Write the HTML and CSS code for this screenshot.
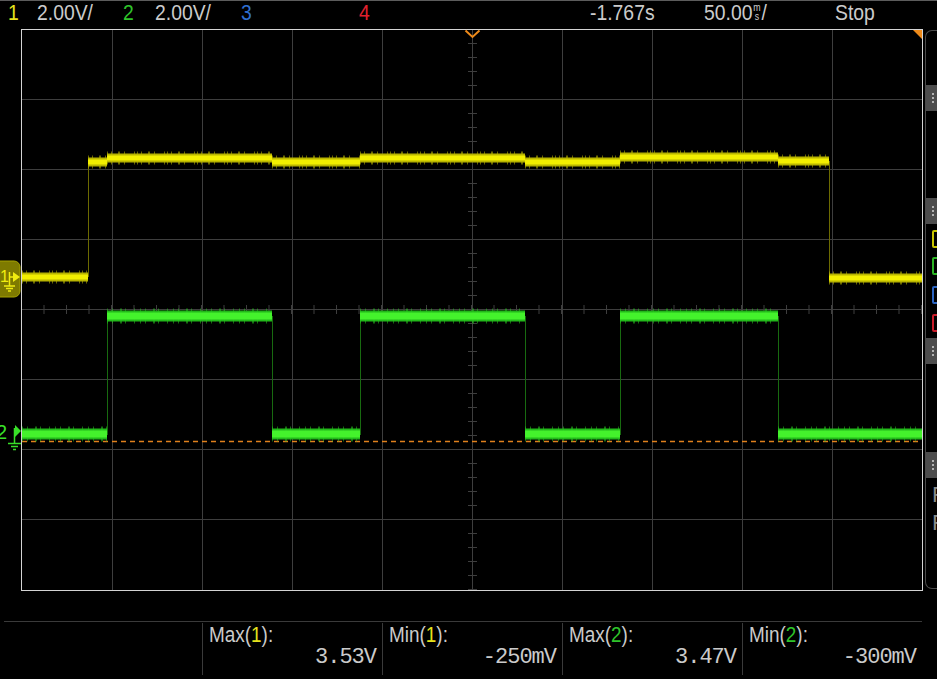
FILE: index.html
```html
<!DOCTYPE html>
<html lang="en">
<head>
    <meta charset="UTF-8">
    <meta name="viewport" content="width=device-width, initial-scale=1.0">
    <title>Scope capture</title>
    <link rel="stylesheet" href="styles.css">
</head>
<body>
    <div class="topbar">
        <span class="ch1">1</span>
        <span>2.00V/</span>
        <span class="ch2">2</span>
        <span>2.00V/</span>
        <span class="ch3">3</span>
        <span class="ch4">4</span>
        <span>-1.767s</span>
        <span>50.00<span class="unit">m<br>s</span>/</span>
        <span>Stop</span>
    </div>

    <div class="scope">
        <svg class="screen" width="925" height="563" viewBox="0 29 925 563">
            <!-- graticule -->
            <path class="grid" d="M21 99.5H922M21 169.5H922M21 239.5H922M21 309.5H922M21 379.5H922M21 449.5H922M21 519.5H922
                M112.5 29V590M202.5 29V590M292.5 29V590M382.5 29V590M472.5 29V590M562.5 29V590M652.5 29V590M742.5 29V590M832.5 29V590"/>
            <path class="ticks-v" d="M472.5 29V590"/>
            <path class="ticks-h" d="M21 309.5H922"/>
            <rect class="frame" x="21.5" y="29.5" width="901" height="561"/>

            <!-- channel 2 reference -->
            <path class="ref" d="M22 441.5H922"/>

            <!-- channel 1 -->
            <path class="edge1" d="M88.5 277V162M829.5 161V278"/>
            <path class="ch1-outer" d="M22 277H88M88 162H107M107 158H272M272 162H360M360 158H525M525 162H620M620 157H778M778 161H829M829 278H922"/>
            <path class="ch1-noise" d="M22 277H88M88 162H107M107 158H272M272 162H360M360 158H525M525 162H620M620 157H778M778 161H829M829 278H922"/>
            <path class="ch1-inner" d="M22 277H88M88 162H107M107 158H272M272 162H360M360 158H525M525 162H620M620 157H778M778 161H829M829 278H922"/>

            <!-- channel 2 -->
            <path class="edge2" d="M107.5 316V435M272.5 316V435M360.5 316V435M525.5 316V435M620.5 316V435M778.5 316V435"/>
            <path class="ch2-outer" d="M22 434H107M107 316H272M272 434H360M360 316H525M525 434H620M620 316H778M778 434H922"/>
            <path class="ch2-noise" d="M22 434H107M107 316H272M272 434H360M360 316H525M525 434H620M620 316H778M778 434H922"/>
            <path class="ch2-inner" d="M22 434H107M107 316H272M272 434H360M360 316H525M525 434H620M620 316H778M778 434H922"/>

            <!-- trigger markers -->
            <path class="trig" d="M465.5 30.5L472.5 37L479.5 30.5"/>
            <path class="trig-fill" d="M913 30H922V39Z"/>

            <!-- ground markers -->
            <rect class="gnd1-box" x="-8" y="261" width="28" height="36" rx="6"/>
            <text class="gnd1-num" x="0" y="282">1</text>
            <path class="gnd1-sym" d="M9.5 272V286M9.5 277H14M4 286H15M6 288.5H13M8 291H11"/>
            <path class="gnd1-head" d="M13 272L20 277L13 282Z"/>

            <text class="gnd2-num" x="-4" y="439">2</text>
            <path class="gnd2-sym" d="M14.5 428V443M14.5 431H16M8 443.5H21M11 446.5H18M13 449.5H16"/>
            <path class="gnd2-head" d="M15 425L21 431L15 437Z"/>
        </svg>

        <div class="side">
            <div class="handle h1"><span class="dots"></span></div>
            <div class="handle h2"><span class="dots"></span></div>
            <div class="chbox box1"></div>
            <div class="chbox box2"></div>
            <div class="chbox box3"></div>
            <div class="chbox box4"></div>
            <div class="handle h3"><span class="dots"></span></div>
            <div class="handle h4"><span class="dots"></span></div>
            <div class="fn f1">F</div>
            <div class="fn">F</div>
        </div>
    </div>

    <div class="measure">
        <div class="rule"></div>
        <div class="cells">
            <div class="cell">
                <div class="label">Max(<span class="ch1">1</span>):</div>
                <div class="value">3.53V</div>
            </div>
            <div class="cell">
                <div class="label">Min(<span class="ch1">1</span>):</div>
                <div class="value">-250mV</div>
            </div>
            <div class="cell">
                <div class="label">Max(<span class="ch2">2</span>):</div>
                <div class="value">3.47V</div>
            </div>
            <div class="cell">
                <div class="label">Min(<span class="ch2">2</span>):</div>
                <div class="value">-300mV</div>
            </div>
        </div>
    </div>
</body>
</html>
```

FILE: styles.css
```css
body {
    margin: 0;
    width: 937px;
    height: 679px;
    overflow: hidden;
    background: #000;
    color: #cbcbcb;
    font-family: 'Liberation Sans', sans-serif;
}

.ch1 { color: #e6e21c; }
.ch2 { color: #2fc42a; }
.ch3 { color: #2f6fd0; }
.ch4 { color: #e0202e; }

/* top status line */
.topbar {
    display: grid;
    grid-template-columns: 29px 86px 32px 86px 118px 231px 114px 131px auto;
    height: 28px;
    padding-left: 8px;
    border-top: 1px solid #5c5c5c;
    font-size: 22px;
    line-height: 23px;
    white-space: nowrap;
}

/* the scope font is a narrow one */
.topbar > span {
    transform: scaleX(0.88);
    transform-origin: left;
}

.unit {
    display: inline-block;
    font-size: 10px;
    line-height: 9px;
    text-align: center;
    margin: 0 1px;
}

/* screen */
.scope {
    display: flex;
    height: 563px;
}

.screen {
    display: block;
    flex: none;
}

.grid {
    fill: none;
    stroke: #3e3e3e;
    stroke-width: 1;
}

.ticks-v {
    stroke: #3e3e3e;
    stroke-width: 9;
    stroke-dasharray: 1 13;
}

.ticks-h {
    stroke: #3e3e3e;
    stroke-width: 9;
    stroke-dasharray: 1 21.5;
}

.frame {
    fill: none;
    stroke: #d4d4d4;
    stroke-width: 1;
}

.ref {
    stroke: #e0801c;
    stroke-width: 1.5;
    stroke-dasharray: 5 4;
}

.edge1 { stroke: #6c6a00; stroke-width: 1; }
.ch1-outer { fill: none; stroke: #b8b400; stroke-width: 9; }
.ch1-noise { fill: none; stroke: #bdb900; stroke-width: 13; stroke-dasharray: 1 3 1 6 2 4 1 9 1 2; opacity: 0.55; }
.ch1-inner { fill: none; stroke: #f2ee00; stroke-width: 5; }

.edge2 { stroke: #186a10; stroke-width: 1; }
.ch2-outer { fill: none; stroke: #22b81a; stroke-width: 11; }
.ch2-noise { fill: none; stroke: #27c21f; stroke-width: 15; stroke-dasharray: 1 4 1 7 2 3 1 8 1 5; opacity: 0.55; }
.ch2-inner { fill: none; stroke: #44f22c; stroke-width: 7; }

.trig {
    fill: none;
    stroke: #ee8a1a;
    stroke-width: 2;
}

.trig-fill { fill: #ee8a1a; }

.gnd1-box {
    fill: #7e7a00;
    stroke: #a6a200;
    stroke-width: 1;
}

.gnd1-num,
.gnd2-num {
    font-family: 'Liberation Sans', sans-serif;
}

.gnd1-num { fill: #f0ec10; font-size: 16px; }
.gnd1-sym { fill: none; stroke: #f0ec10; stroke-width: 1.5; }
.gnd1-head { fill: #f0ec10; }

.gnd2-num { fill: #38e028; font-size: 20px; }
.gnd2-sym { fill: none; stroke: #38e028; stroke-width: 1.5; }
.gnd2-head { fill: #38e028; }

/* right-hand drawer */
.side {
    flex: none;
    box-sizing: border-box;
    width: 12px;
    height: 559px;
    margin-top: 1px;
    border: 1px solid #4a4a4a;
    border-right: none;
    border-radius: 7px 0 0 7px;
    overflow: hidden;
    display: flex;
    flex-direction: column;
}

.handle {
    flex: none;
    height: 26px;
    background: #4d4d4d;
    display: flex;
    align-items: center;
    padding-left: 6px;
}

.dots {
    width: 2px;
    height: 2px;
    margin-top: -8px;
    background: #b4b4b4;
    box-shadow: 0 4px #b4b4b4, 0 8px #b4b4b4;
}

.h1 { margin-top: 54px; }
.h2 { margin-top: 87px; }
.h3 { margin-top: 6px; }
.h4 { margin-top: 88px; }

.chbox {
    flex: none;
    box-sizing: border-box;
    width: 20px;
    height: 18px;
    margin-left: 6px;
    border: 2px solid;
    border-radius: 2px;
}

.box1 { margin-top: 6px; border-color: #c8c400; }
.box2 { margin-top: 9px; border-color: #2cb424; }
.box3 { margin-top: 11px; border-color: #2c64c0; }
.box4 { margin-top: 10px; border-color: #c81c2a; }

.fn {
    margin-left: 6px;
    color: #8a8a8a;
    font-size: 22px;
    line-height: 20px;
    margin-top: 8px;
}

.f1 { margin-top: 7px; }

/* measurement strip */
.measure {
    height: 87px;
}

.rule {
    margin: 29px 15px 0 4px;
    border-top: 1px solid #3a3a3a;
}

.cells {
    display: grid;
    grid-template-columns: repeat(4, 180px);
    margin-left: 202px;
    padding-top: 1px;
    font-size: 22px;
    line-height: 23px;
}

.cell {
    height: 52px;
    padding: 0 7px 0 6px;
    border-left: 1px solid #3a3a3a;
}

.label {
    transform: scaleX(0.86);
    transform-origin: left;
}

.value {
    text-align: right;
    font-family: 'Liberation Mono', monospace;
    letter-spacing: -1px;
    margin-right: -1px;
}
```
